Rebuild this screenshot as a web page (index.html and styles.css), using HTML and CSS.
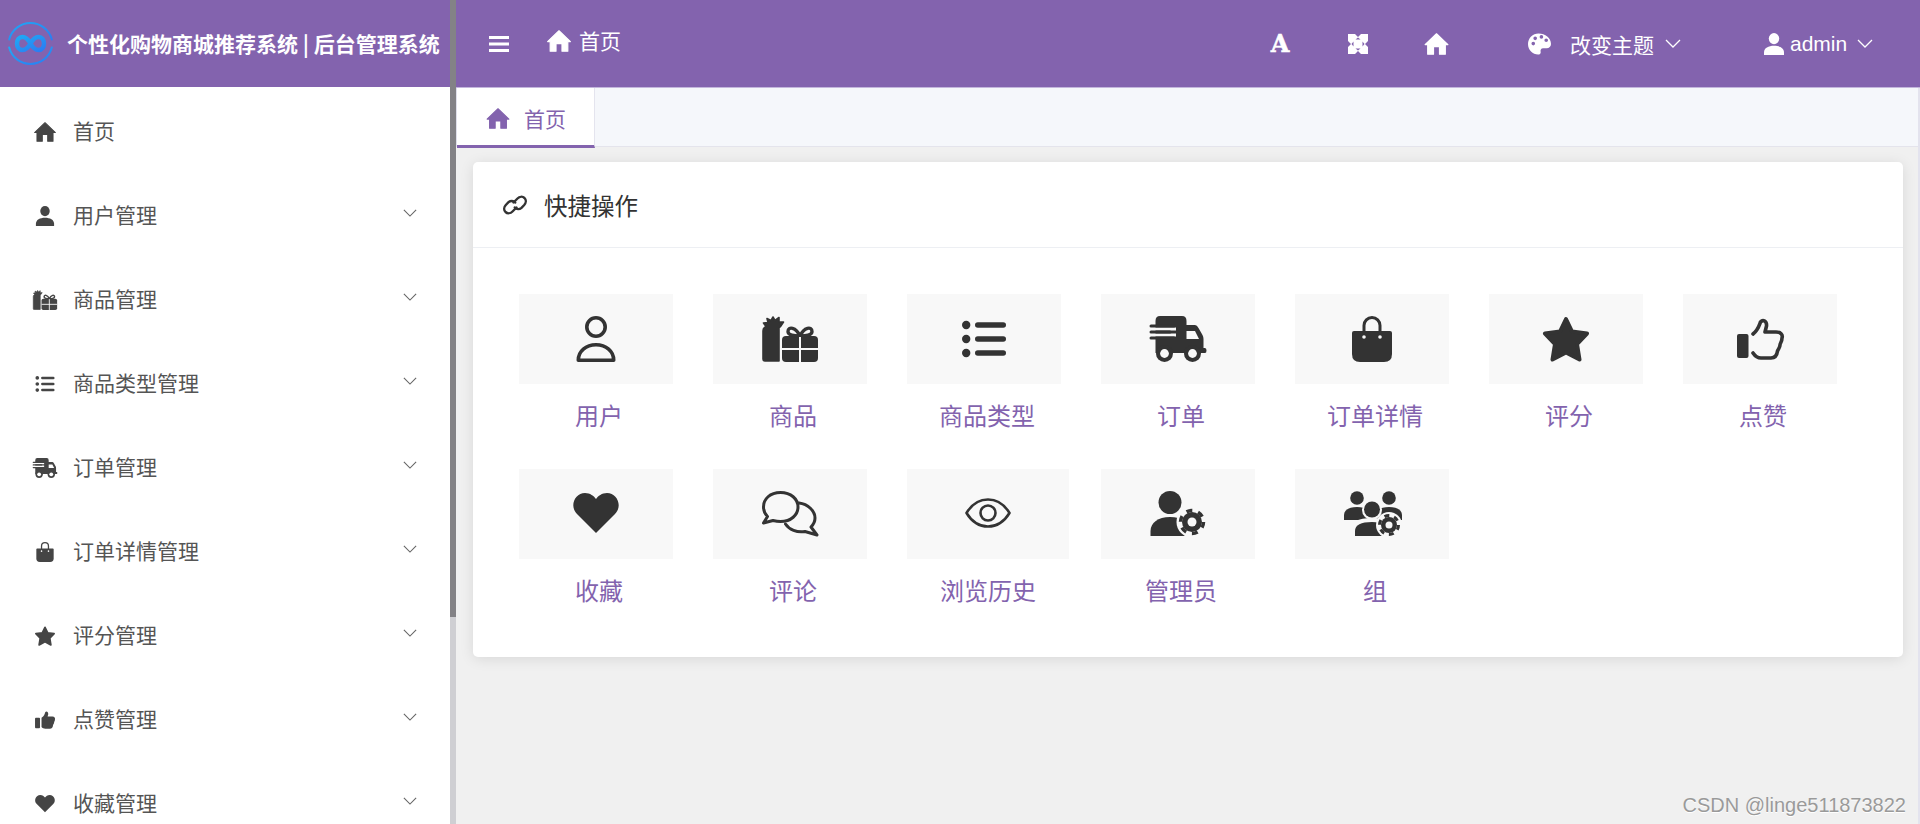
FILE: index.html
```html
<!DOCTYPE html>
<html lang="zh-CN">
<head>
<meta charset="utf-8">
<title>个性化购物商城推荐系统</title>
<link rel="stylesheet" href="styles.css">
</head>
<body>
<svg class="sprite" aria-hidden="true">
  <defs>
    <linearGradient id="logo-grad" x1="0" y1="0" x2="1" y2="1">
      <stop offset="0" stop-color="#1fa8f5"/>
      <stop offset="1" stop-color="#2b7cf2"/>
    </linearGradient>
    <symbol id="i-home" viewBox="0 0 24 22">
      <path d="M12 .8 23.4 11.6H20.8V21.2H15V13.6H9V21.2H3.2V11.6H.6Z" stroke="currentColor" stroke-width="1.2" stroke-linejoin="round"/>
    </symbol>
    <symbol id="i-user-solid" viewBox="0 0 20 22">
      <ellipse cx="10" cy="5.6" rx="5.2" ry="5.6"/>
      <path d="M0 22V19.5C0 15 4.5 12.8 10 12.8S20 15 20 19.5V22Z"/>
    </symbol>
    <symbol id="i-user" viewBox="0 0 60 46">
      <g fill="none" stroke="currentColor" stroke-width="3.6" stroke-linejoin="round">
        <circle cx="30" cy="11" r="9.2"/>
        <path d="M12.3 44.2C12.3 35 20 28.8 30 28.8S47.7 35 47.7 44.2Z"/>
      </g>
    </symbol>
    <symbol id="i-gift" viewBox="0 0 60 46">
      <path d="M5 45Q3 45 3 43V15Q3 12 6 10.500L3.500 7 8 6.500 7 2.500 11 4.500 13 1 15 4.500 19 1.500 19 6 23.500 6 20.500 10.500 19 12V45Z" stroke="currentColor" stroke-width="1.600" stroke-linejoin="round"/>
      <rect x="22" y="20" width="36" height="26" rx="4"/>
      <path d="M40 20C36 11 28 10 28 15.500 28 19 33 20 40 20 47 20 52 19 52 15.500 52 10 44 11 40 20Z" fill="none" stroke="currentColor" stroke-width="3.400"/>
      <path class="gap-stroke" d="M40 21V46M22 33H58" fill="none" stroke-width="2"/>
    </symbol>
    <symbol id="i-list" viewBox="0 0 60 46">
      <circle cx="12.2" cy="9" r="4.2"/><circle cx="12.2" cy="23" r="4.2"/><circle cx="12.2" cy="37" r="4.2"/>
      <rect x="21" y="6.2" width="31" height="5.6" rx="2.8"/><rect x="21" y="20.2" width="31" height="5.6" rx="2.8"/><rect x="21" y="34.2" width="31" height="5.6" rx="2.8"/>
    </symbol>
    <symbol id="i-truck" viewBox="0 0 60 46">
      <path d="M7.5 5Q7.5 0 12 0H34Q38.5 0 38.5 5V9H47Q49 9 50.5 12L54.5 19Q55.5 21 55.5 23V32H57Q58.5 32 58.5 34.5 58.5 37 57 37H7.5Z"/>
      <path class="gap-stroke" d="M0 13H28M0 19H28" fill="none" stroke-width="3"/>
      <rect x="1.5" y="8.5" width="26" height="3" rx="1.5"/>
      <rect x="1.5" y="14.5" width="22" height="3" rx="1.5"/>
      <rect x="1.5" y="20.5" width="26" height="3" rx="1.5"/>
      <path class="gap-fill" d="M38.5 15H47L51 23H38.5Z"/>
      <circle cx="16.5" cy="37.5" r="8.5"/><circle cx="44.5" cy="37.5" r="8.5"/>
      <circle class="gap-fill" cx="16.5" cy="37.5" r="4.4"/><circle class="gap-fill" cx="44.5" cy="37.5" r="4.4"/>
    </symbol>
    <symbol id="i-bag" viewBox="0 0 60 46">
      <path d="M22 16V9.500A8 8 0 0 1 38 9.500V16" fill="none" stroke="currentColor" stroke-width="3"/>
      <path d="M12 15H48Q50 15 50 17V38Q50 46 42 46H18Q10 46 10 38V17Q10 15 12 15Z"/>
      <circle class="gap-fill" cx="22" cy="21" r="1.8"/><circle class="gap-fill" cx="38" cy="21" r="1.8"/>
    </symbol>
    <symbol id="i-star" viewBox="0 0 60 46">
      <path d="M30 3 36 15.5 51 17.5 41 28 43.5 43.5 30 36.5 16.5 43.5 19 28 9 17.5 24 15.5Z" stroke="currentColor" stroke-width="4" stroke-linejoin="round"/>
    </symbol>
    <symbol id="i-thumb" viewBox="0 0 60 46">
      <rect x="7" y="18" width="11.5" height="24" rx="2"/>
      <path d="M23 18C28 14 29 10 30.5 6 33 3 37 5 36.5 10L35 16H46C51 16 53 19 52 22 52 26 50 27 50 29 50 32 48 33 47.5 35 47 39 45 42 41 42H31C27 42 25 40 23 37" fill="none" stroke="currentColor" stroke-width="3.6" stroke-linecap="round" stroke-linejoin="round"/>
    </symbol>
    <symbol id="i-thumb-solid" viewBox="0 0 60 46">
      <rect x="7" y="18" width="11.5" height="24" rx="2"/>
      <path d="M22 18C28 14 29 10 30.5 5 33 1 38 4 37.5 10L36 15H47C52 15 54 19 53 22 53 26 51 27 51 29 51 32 49 33 48.500 35 48 40 46 43 41 43H31C27 43 24 41 22 39Z"/>
    </symbol>
    <symbol id="i-heart" viewBox="0 0 60 46">
      <path d="M30 42 11 23C3 15 9 2 19 2 24 2 28 5 30 8 32 5 36 2 41 2 51 2 57 15 49 23Z"/>
    </symbol>
    <symbol id="i-comment" viewBox="0 0 60 46">
      <g fill="none" stroke="currentColor" stroke-width="3" stroke-linejoin="round" stroke-linecap="round">
        <path d="M20.5 1.500C10 1.500 3.500 8 3.500 16 3.500 20 5 23 7.500 25.500L3.500 32 13 29.500C15 30 18 30.500 20.500 30.500 31 30.500 38 24 38 16 38 8 31 1.500 20.500 1.500Z"/>
        <path d="M39 12C48 13 55 20 55 27 55 30 54 33 51 36L57 44 45 40.500C37 42 29 38.500 25.500 33"/>
      </g>
    </symbol>
    <symbol id="i-eye" viewBox="0 0 60 46">
      <g fill="none" stroke="currentColor" stroke-width="2.600" stroke-linejoin="round">
        <path d="M8.500 22C14 13 21 8.500 30 8.500 39 8.500 46 13 51.500 22 46 31 39 35.500 30 35.500 21 35.500 14 31 8.500 22Z"/>
        <circle cx="30" cy="22" r="7.500"/>
      </g>
    </symbol>
    <symbol id="i-admin" viewBox="0 0 60 46">
      <circle cx="22" cy="11.500" r="11.500"/>
      <path d="M2.500 45V40C2.500 32 10 26 22 26S41.500 32 41.500 40V45Z"/>
      <circle class="gap-fill" cx="44" cy="31" r="15.500"/>
      <circle cx="44" cy="31" r="10"/>
      <circle cx="44" cy="31" r="11.500" fill="none" stroke="currentColor" stroke-width="3.500" stroke-dasharray="6 6.040"/>
      <circle class="gap-fill" cx="44" cy="31" r="4.500"/>
    </symbol>
    <symbol id="i-group" viewBox="0 0 60 46">
      <circle cx="15" cy="7" r="6.800"/><circle cx="47" cy="7" r="6.800"/>
      <path d="M2 29V24C2 19 7 16 15 16S28 19 28 24V29Z"/>
      <path d="M34 29V24C34 19 39 16 47 16S60 19 60 24V29Z"/>
      <circle class="gap-fill" cx="30" cy="19" r="10"/>
      <path class="gap-fill" d="M8 46V38C8 31 16 27 30 27S50 31 50 38V46Z"/>
      <circle cx="30" cy="18.500" r="8"/>
      <path d="M13 45V40C13 34 19 31 30 31S44 34 44 40V45Z"/>
      <circle class="gap-fill" cx="47" cy="34" r="13"/>
      <circle cx="47" cy="34" r="8"/>
      <circle cx="47" cy="34" r="9.500" fill="none" stroke="currentColor" stroke-width="3" stroke-dasharray="5 4.950"/>
      <circle class="gap-fill" cx="47" cy="34" r="3.500"/>
    </symbol>
    <symbol id="i-link" viewBox="0 0 24 20">
      <g fill="none" stroke="currentColor" stroke-width="2.400" stroke-linecap="round">
        <path d="M10.500 7.500 14.500 3.500C16.500 1.500 19.500 1.200 21.500 3 23.500 5 23 8 21.200 10L18.500 12.800C16.500 14.500 13.500 14.500 11.800 12.500"/>
        <path d="M13.500 12.500 9.500 16.500C7.500 18.500 4.500 18.800 2.500 17 .5 15 1 12 2.800 10L5.500 7.200C7.500 5.500 10.500 5.500 12.200 7.500"/>
      </g>
    </symbol>
    <symbol id="i-expand" viewBox="0 0 20 20">
      <path d="M0 0H7L10 3 13 0H20V7L17 10 20 13V20H13L10 17 7 20H0V13L3 10 0 7Z"/>
      <path class="expand-cut" d="M7.500 5.500 10 3.500 12.500 5.500ZM14.500 7.500 16.500 10 14.500 12.500ZM12.500 14.500 10 16.500 7.500 14.500ZM5.500 12.500 3.500 10 5.500 7.500Z"/>
    </symbol>
    <symbol id="i-palette" viewBox="0 0 24 22">
      <path fill-rule="evenodd" d="M11 0C5 0 0 4.800 0 11S5 22 10.500 22C12.500 22 13.500 20.800 13.200 19.300 12.800 17.500 13.400 15.500 15.800 15.500H19.500C22 15.500 24 13.500 24 11 24 4.500 18 0 11 0ZM5.500 12.500A1.900 1.900 0 1 1 5.500 8.700 1.900 1.900 0 0 1 5.500 12.500ZM7.500 7A1.900 1.900 0 1 1 7.500 3.200 1.900 1.900 0 0 1 7.500 7ZM14 5.500A1.900 1.900 0 1 1 14 1.700 1.900 1.900 0 0 1 14 5.500ZM19 9A1.900 1.900 0 1 1 19 5.200 1.900 1.900 0 0 1 19 9Z"/>
    </symbol>
    <symbol id="i-chev" viewBox="0 0 16 9">
      <path d="M1 1 8 8 15 1" fill="none" stroke="currentColor" stroke-width="1.300"/>
    </symbol>
  </defs>
</svg>

<div class="app">
  <aside class="sidebar">
    <div class="brand">
      <svg class="brand-logo" viewBox="0 0 45 45">
        <g fill="none" stroke="url(#logo-grad)" stroke-width="2" stroke-linecap="round">
          <path d="M1.200 18.500A22 22 0 0 1 43.800 18.500"/>
          <path d="M43.800 26.500A22 22 0 0 1 1.200 26.500"/>
        </g>
        <path d="M22.500 22.500C20 18 17.500 16 14.500 16 11 16 9 19 9 22.500S11 29 14.500 29C17.500 29 20 27 22.500 22.500S27.500 16 30.500 16C34 16 36 19 36 22.500S34 29 30.500 29C27.500 29 25 27 22.500 22.500Z" fill="none" stroke="url(#logo-grad)" stroke-width="4.500"/>
      </svg>
      <span class="brand-title">个性化购物商城推荐系统 | 后台管理系统</span>
    </div>
    <ul class="menu">
      <li class="menu-item"><svg class="menu-icon home"><use href="#i-home"/></svg><span class="menu-text">首页</span></li>
      <li class="menu-item"><svg class="menu-icon user"><use href="#i-user-solid"/></svg><span class="menu-text">用户管理</span><svg class="chev"><use href="#i-chev"/></svg></li>
      <li class="menu-item"><svg class="menu-icon"><use href="#i-gift"/></svg><span class="menu-text">商品管理</span><svg class="chev"><use href="#i-chev"/></svg></li>
      <li class="menu-item"><svg class="menu-icon"><use href="#i-list"/></svg><span class="menu-text">商品类型管理</span><svg class="chev"><use href="#i-chev"/></svg></li>
      <li class="menu-item"><svg class="menu-icon"><use href="#i-truck"/></svg><span class="menu-text">订单管理</span><svg class="chev"><use href="#i-chev"/></svg></li>
      <li class="menu-item"><svg class="menu-icon"><use href="#i-bag"/></svg><span class="menu-text">订单详情管理</span><svg class="chev"><use href="#i-chev"/></svg></li>
      <li class="menu-item"><svg class="menu-icon"><use href="#i-star"/></svg><span class="menu-text">评分管理</span><svg class="chev"><use href="#i-chev"/></svg></li>
      <li class="menu-item"><svg class="menu-icon"><use href="#i-thumb-solid"/></svg><span class="menu-text">点赞管理</span><svg class="chev"><use href="#i-chev"/></svg></li>
      <li class="menu-item"><svg class="menu-icon"><use href="#i-heart"/></svg><span class="menu-text">收藏管理</span><svg class="chev"><use href="#i-chev"/></svg></li>
    </ul>
  </aside>
  <div class="scrollbar"><div class="scrollbar-thumb"></div></div>
  <main class="main">
    <header class="topbar">
      <svg class="burger" viewBox="0 0 20 16"><path d="M0 1.500H20M0 8H20M0 14.500H20" stroke="currentColor" stroke-width="3" fill="none"/></svg>
      <div class="crumb"><svg class="crumb-home"><use href="#i-home"/></svg><span>首页</span></div>
      <div class="tools">
        <span class="tool-a">A</span>
        <svg class="tool-expand"><use href="#i-expand"/></svg>
        <svg class="tool-home"><use href="#i-home"/></svg>
        <svg class="tool-palette"><use href="#i-palette"/></svg>
        <span class="tool-theme">改变主题</span>
        <svg class="tool-chev"><use href="#i-chev"/></svg>
        <svg class="tool-user"><use href="#i-user-solid"/></svg>
        <span class="tool-admin">admin</span>
        <svg class="tool-chev"><use href="#i-chev"/></svg>
      </div>
    </header>
    <nav class="tabs">
      <div class="tab"><svg class="tab-home"><use href="#i-home"/></svg><span class="tab-text">首页</span></div>
    </nav>
    <section class="content">
      <div class="card">
        <div class="card-head"><svg class="card-link"><use href="#i-link"/></svg><span>快捷操作</span></div>
        <div class="shortcuts">
          <a class="shortcut"><span class="tile"><svg class="tile-icon"><use href="#i-user"/></svg></span><span class="label">用户</span></a>
          <a class="shortcut"><span class="tile"><svg class="tile-icon"><use href="#i-gift"/></svg></span><span class="label">商品</span></a>
          <a class="shortcut"><span class="tile"><svg class="tile-icon"><use href="#i-list"/></svg></span><span class="label">商品类型</span></a>
          <a class="shortcut"><span class="tile"><svg class="tile-icon"><use href="#i-truck"/></svg></span><span class="label">订单</span></a>
          <a class="shortcut"><span class="tile"><svg class="tile-icon"><use href="#i-bag"/></svg></span><span class="label">订单详情</span></a>
          <a class="shortcut"><span class="tile"><svg class="tile-icon"><use href="#i-star"/></svg></span><span class="label">评分</span></a>
          <a class="shortcut"><span class="tile"><svg class="tile-icon"><use href="#i-thumb"/></svg></span><span class="label">点赞</span></a>
          <a class="shortcut"><span class="tile"><svg class="tile-icon"><use href="#i-heart"/></svg></span><span class="label">收藏</span></a>
          <a class="shortcut"><span class="tile"><svg class="tile-icon"><use href="#i-comment"/></svg></span><span class="label">评论</span></a>
          <a class="shortcut shortcut-wide"><span class="tile"><svg class="tile-icon"><use href="#i-eye"/></svg></span><span class="label">浏览历史</span></a>
          <a class="shortcut"><span class="tile"><svg class="tile-icon"><use href="#i-admin"/></svg></span><span class="label">管理员</span></a>
          <a class="shortcut"><span class="tile"><svg class="tile-icon"><use href="#i-group"/></svg></span><span class="label">组</span></a>
        </div>
      </div>
    </section>
  </main>
  <div class="watermark">CSDN @linge511873822</div>
</div>
</body>
</html>
```
FILE: styles.css
```css
* { box-sizing: border-box; }
html, body { margin: 0; height: 100%; overflow: hidden; }
body {
  font-family: "Noto Sans CJK SC", "Liberation Sans", sans-serif;
  background: #f0f0f0;
  color: #333;
}
svg { fill: currentColor; display: block; flex: none; }
.sprite { position: absolute; width: 0; height: 0; }
.gap-fill { fill: var(--gap, #fff); }
.gap-stroke { stroke: var(--gap, #fff); }

.app { position: relative; display: flex; height: 100vh; }

/* sidebar */
.sidebar { width: 450px; flex: none; background: #fff; overflow: hidden; --gap: #fff; }
.brand {
  height: 87px;
  background: #8363ae;
  display: flex;
  align-items: center;
  gap: 14px;
  padding-left: 8px;
}
.brand-logo { width: 45px; height: 45px; }
.brand-title {
  color: #fff;
  font-size: 21px;
  font-weight: 700;
  white-space: nowrap;
  line-height: 30px;
  margin-bottom: 2px;
}
.menu { list-style: none; margin: 0; padding: 3px 0 0; }
.menu-item {
  height: 84px;
  display: flex;
  align-items: center;
  padding: 0 33px 0 32px;
  gap: 15px;
  font-size: 21px;
  color: #555;
}
.menu-text { margin-bottom: 4px; }
.menu-icon { width: 26px; height: 20px; color: #454545; }
.chev { width: 14px; height: 8px; margin: -6px 0 0 auto; color: #666; }

.scrollbar { width: 6px; flex: none; background: #cfcfd3; }
.scrollbar-thumb { height: 617px; background: #838286; }

/* main */
.main { flex: 1; min-width: 0; display: flex; flex-direction: column; border-right: 2px solid #e3e3ee; }
.topbar {
  height: 88px;
  flex: none;
  background: #8363ae;
  border-bottom: 1px solid #c3b6dc;
  color: #fff;
  display: flex;
  align-items: center;
  padding-left: 33px;
  margin-right: -2px;
}
.burger { width: 20px; height: 16px; }
.crumb { display: flex; align-items: center; gap: 8px; margin: 0 0 8px 38px; font-size: 21px; line-height: 28px; }
.crumb-home { width: 24px; height: 22px; margin-top: 2px; }
.tools { margin-left: auto; padding-right: 47px; display: flex; align-items: center; font-size: 21px; }
.tool-a { width: 20px; text-align: center; font-family: "DejaVu Serif", serif; font-weight: 700; font-size: 24px; line-height: 28px; -webkit-text-stroke: .5px #fff; }
.tool-expand { width: 20px; height: 20px; margin-left: 58px; }
.expand-cut { fill: #8363ae; }
.tool-home { width: 25px; height: 22px; margin-left: 56px; }
.tool-palette { width: 23px; height: 22px; margin-left: 79px; }
.tool-theme { margin-left: 19px; width: 85px; line-height: 28px; }
.tool-chev { width: 16px; height: 9px; margin-left: 10px; }
.tool-user { width: 20px; height: 22px; margin-left: 83px; }
.tool-admin { margin-left: 6px; font-family: "Liberation Sans", sans-serif; width: 57px; line-height: 28px; }

.tabs { height: 59px; flex: none; background: #f5f7fb; border-bottom: 1px solid #e4e4ec; border-left: 1px solid #dfdfea; display: flex; }
.tab {
  width: 138px;
  height: 60px;
  background: #fff;
  border-right: 1px solid #e4e4ee;
  border-bottom: 3px solid #8363ae;
  display: flex;
  align-items: center;
  padding-left: 29px;
  gap: 14px;
  color: #8363ae;
  font-size: 21px;
}
.tab-home { width: 24px; height: 21px; margin-top: 3px; }
.tab-text { margin-top: 2px; }

.content { flex: 1; padding: 15px 15px 0 17px; }
.card { background: #fff; border-radius: 5px; box-shadow: 0 2px 14px rgba(0, 0, 0, .1); --gap: #f8f8f8; }
.card-head {
  height: 86px;
  border-bottom: 1px solid #edeff3;
  display: flex;
  align-items: center;
  padding-left: 30px;
  gap: 17px;
  font-size: 23.500px;
  color: #333;
}
.card-link { width: 24px; height: 20px; }
.shortcuts {
  display: grid;
  grid-template-columns: repeat(7, 154px);
  column-gap: 40px;
  row-gap: 35px;
  padding: 46px 0 48px 46px;
}
.shortcut { display: flex; flex-direction: column; align-items: stretch; }
.shortcut-wide { width: 162px; }
.tile {
  height: 90px;
  background: #f8f8f8;
  display: flex;
  align-items: center;
  justify-content: center;
  color: #333;
}
.tile-icon { width: 60px; height: 46px; }
.label {
  margin-top: 13px;
  padding-left: 6px;
  padding-bottom: 1px;
  font-size: 24px;
  line-height: 36px;
  text-align: center;
  color: #8363ae;
}
.shortcut-wide .label { padding-left: 0; }

.watermark {
  position: absolute;
  right: 14px;
  bottom: 8px;
  font-family: "Liberation Sans", sans-serif;
  font-size: 20px;
  line-height: 22px;
  color: #9a9a9a;
  text-shadow: 0 1px 0 #fff;
}
```
